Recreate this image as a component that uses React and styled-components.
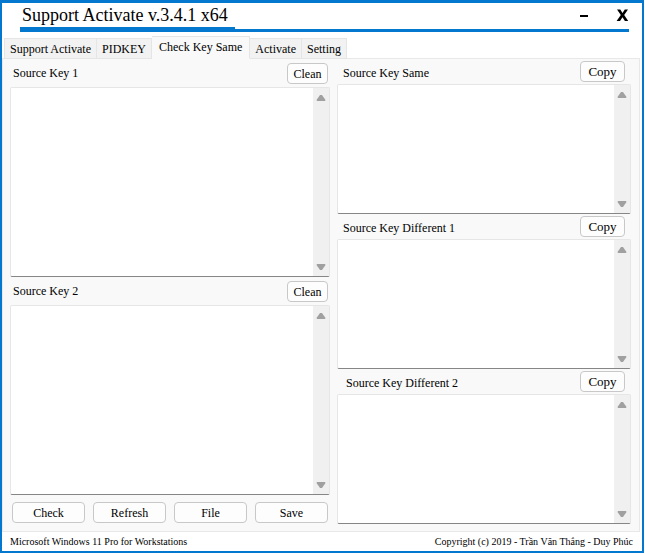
import React from "react";
import styled, { createGlobalStyle, css } from "styled-components";

const GlobalStyle = createGlobalStyle`
  * { box-sizing: border-box; }
  body {
    margin: 0;
    background: #ffffff;
    color: #000000;
    font-family: "Liberation Serif", "Times New Roman", serif;
    font-size: 12px;
    line-height: 16px;
  }
  button, textarea { font: inherit; color: inherit; margin: 0; }
`;

const Window = styled.div`
  display: flex;
  flex-direction: column;
  min-height: calc(100vh - 1px);
  margin-right: 1px;
  border: 2px solid #0477cf;
  border-top-width: 3px;
  background: #ffffff;
`;

const TitleBar = styled.header`
  display: flex;
  align-items: flex-end;
  height: 29px;
  margin: 0 13px 0 18px;
`;

const Title = styled.h1`
  height: 29px;
  margin: 0;
  padding: 0 7px 0 2px;
  border-bottom: 5px solid #0477cf;
  font-size: 18px;
  font-weight: 400;
  line-height: 24px;
  white-space: nowrap;
`;

const Controls = styled.div`
  display: flex;
  flex: 1;
  justify-content: flex-end;
  gap: 24px;
  height: 29px;
  border-bottom: 3px solid #0477cf;
`;

const ControlButton = styled.button`
  display: flex;
  width: 14px;
  height: 24px;
  padding: 0;
  border: 0;
  background: transparent;
`;

const TabList = styled.div`
  position: relative;
  z-index: 1;
  display: flex;
  align-items: flex-end;
  height: 27px;
  margin-bottom: -1px;
  padding-left: 2px;
`;

const Tab = styled.button`
  height: 21px;
  padding: 0 5px;
  border: 1px solid #e5e5e5;
  border-left-width: 0;
  background: #f2f2f2;
  white-space: nowrap;

  &:first-child { border-left-width: 1px; }

  ${({ $active }) => $active && css`
    height: 23px;
    padding: 0 7px 2px;
    border-bottom-color: #f9f9f9;
    background: #f9f9f9;
  `}
`;

const Page = styled.main`
  display: grid;
  flex: 1;
  grid-template-columns: 320fr 294fr;
  gap: 7px;
  margin-right: 2px;
  padding: 0 8px 7px 7px;
  border: 1px solid #e8e8e8;
  background: #f9f9f9;
`;

const Column = styled.div`
  display: flex;
  flex-direction: column;
  min-width: 0;
`;

const FieldHeader = styled.div`
  display: flex;
  align-items: flex-start;
  justify-content: space-between;
  height: ${({ $compact }) => ($compact ? 25 : 28)}px;
  padding: ${({ $compact }) => ($compact ? "2px 6px 0 6px" : "4px 2px 0 3px")};
`;

const Label = styled.label`
  padding-top: 2px;
  padding-left: ${({ $indent }) => ($indent ? 3 : 0)}px;

  ${({ $low }) => $low && css`
    padding-top: 4px;
  `}
`;

const Button = styled.button`
  flex: ${({ $fill }) => ($fill ? "1" : "none")};
  width: ${({ $wide }) => ($wide ? 45 : 41)}px;
  height: 21px;
  padding: 0;
  border: 1px solid #c8c8c8;
  border-radius: 4px;
  background: #fdfdfd;
  font-size: ${({ $wide }) => ($wide ? 13 : 12)}px;
  line-height: 16px;
`;

const TextFrame = styled.div`
  display: flex;
  flex: 1;
  min-height: 80px;
  border: 1px solid #e6e6e6;
  border-bottom-color: #868686;
  border-radius: 2px;
  background: #ffffff;
`;

const TextBox = styled.textarea`
  flex: 1;
  min-width: 0;
  padding: 2px 4px;
  border: 0;
  outline: 0;
  background: transparent;
  resize: none;
  overflow: hidden;
`;

const ScrollTrack = styled.div`
  display: flex;
  flex-direction: column;
  justify-content: space-between;
  align-items: center;
  width: 16px;
  padding: 6px 0 5px;
  background: #f0f0f0;
`;

const Actions = styled.div`
  display: flex;
  gap: 8px;
  margin-top: 7px;
  padding: 0 2px 1px;
`;

const Footer = styled.footer`
  display: flex;
  justify-content: space-between;
  height: 19px;
  padding: 0 9px 0 8px;
  font-size: 10px;
  line-height: 20px;
`;

function Arrow({ down }) {
  return (
    <svg width="10" height="8" viewBox="0 0 10 8" aria-hidden="true">
      <path
        d={down ? "M1 1h8l.5 1L6 7H4L.5 2z" : "M1 7h8l.5-1L6 1H4L.5 6z"}
        fill="#a0a0a0"
      />
    </svg>
  );
}

function KeyField({ id, label, action, compact, indent }) {
  return (
    <>
      <FieldHeader $compact={compact}>
        <Label htmlFor={id} $low={compact} $indent={indent}>{label}</Label>
        <Button type="button" $wide={compact}>{action}</Button>
      </FieldHeader>
      <TextFrame>
        <TextBox id={id} spellCheck={false} />
        <ScrollTrack>
          <Arrow />
          <Arrow down />
        </ScrollTrack>
      </TextFrame>
    </>
  );
}

const tabs = ["Support Activate", "PIDKEY", "Check Key Same", "Activate", "Setting"];
const actions = ["Check", "Refresh", "File", "Save"];

export default function App() {
  const [active, setActive] = React.useState("Check Key Same");
  return (
    <>
      <GlobalStyle />
      <Window>
        <TitleBar>
          <Title>Support Activate v.3.4.1 x64</Title>
          <Controls>
            <ControlButton type="button" aria-label="Minimize">
              <svg width="14" height="24" viewBox="0 0 14 24">
                <path d="M3 12h8v2H3z" fill="#000" />
              </svg>
            </ControlButton>
            <ControlButton type="button" aria-label="Close">
              <svg width="14" height="24" viewBox="0 0 14 24">
                <path d="M2 6.500h3.300L7.500 10l2.300-3.500H13L9.200 12l4 6H9.900L7.500 14.200 5 18H1.600L5.800 12z" fill="#000" />
              </svg>
            </ControlButton>
          </Controls>
        </TitleBar>
        <TabList role="tablist">
          {tabs.map((name) => (
            <Tab
              key={name}
              type="button"
              role="tab"
              aria-selected={name === active}
              $active={name === active}
              onClick={() => setActive(name)}
            >
              {name}
            </Tab>
          ))}
        </TabList>
        <Page>
          <Column>
            <KeyField id="source1" label="Source Key 1" action="Clean" />
            <KeyField id="source2" label="Source Key 2" action="Clean" />
            <Actions>
              {actions.map((name) => (
                <Button key={name} type="button" $fill>{name}</Button>
              ))}
            </Actions>
          </Column>
          <Column>
            <KeyField id="same" label="Source Key Same" action="Copy" compact />
            <KeyField id="different1" label="Source Key Different 1" action="Copy" compact />
            <KeyField id="different2" label="Source Key Different 2" action="Copy" compact indent />
          </Column>
        </Page>
        <Footer>
          <span>Microsoft Windows 11 Pro for Workstations</span>
          <span>Copyright (c) 2019 - Trần Văn Thắng - Duy Phúc</span>
        </Footer>
      </Window>
    </>
  );
}
